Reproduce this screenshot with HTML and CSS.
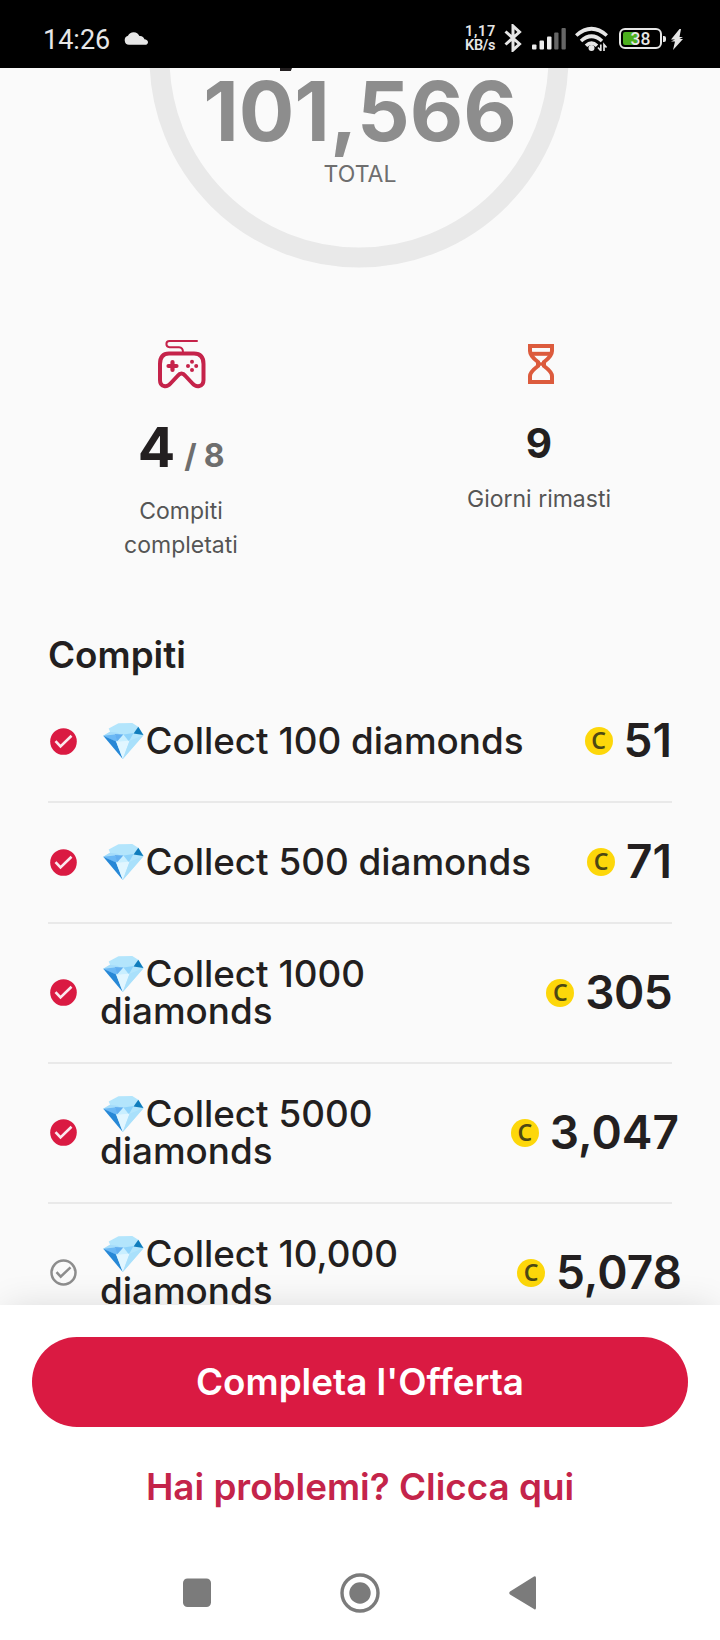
FILE: index.html
```html
<!DOCTYPE html>
<html lang="it">
<head>
<meta charset="utf-8">
<title>Compiti</title>
<link rel="stylesheet" href="styles.css">
</head>
<body>
<svg class="defs" width="0" height="0">
  <symbol id="done" viewBox="0 0 27 27"><circle cx="13.5" cy="13.5" r="13.3" fill="#da1a42"/><path d="M5.5 13.2l5 5.2L21.5 7.8" fill="none" stroke="#fbe9ee" stroke-width="2.6"/></symbol>
  <symbol id="todo" viewBox="0 0 27 27"><circle cx="13.5" cy="13.5" r="12" fill="none" stroke="#8d8d8d" stroke-width="2.5"/><path d="M6.5 13.2l4.2 4.5 9.8-9.4" fill="none" stroke="#8d8d8d" stroke-width="2.5"/></symbol>
  <symbol id="gem" viewBox="0 0 120 107">
    <path d="M0 38L20 26L16 16L45 1L86 0L104 11L120 36L58 107Z" fill="#b3e5fc"/>
    <path d="M0 38L20 26L46 30L36 54Z" fill="#a5dcfa"/>
    <path d="M0 38L34 34L46 50L36 55Z" fill="#6bb8f5"/>
    <path d="M34 33L60 34L42 54Z" fill="#62aef0"/>
    <path d="M60 34L42 54L76 54Z" fill="#c9efff"/>
    <path d="M60 34L90 30L76 54Z" fill="#8fd3fa"/>
    <path d="M104 11L119 36L90 31Z" fill="#0f7cbc"/>
    <path d="M0 38L38 55L58 107Z" fill="#2787d6"/>
    <path d="M38 55L78 53L58 107Z" fill="#e1f6ff"/>
    <path d="M78 53L120 36L58 107Z" fill="#a9e0fb"/>
  </symbol>
</svg>
<header class="status">
  <span class="clock">14:26</span>
  <svg class="cloud" width="24" height="13" viewBox="0 0 24 13"><path d="M5 12.800a4.600 4.600 0 0 1-1-9C5 1.500 7 .2 9.700 .2c2.800 0 4.600 1.500 5.700 3.800 2.400-.4 4.500 1 5 3.200C22.500 7.400 24 8.500 24 10.200c0 1.500-1.200 2.600-2.800 2.600z" fill="#e6e6e6"/></svg>
  <div class="speed"><span class="rate">1,17</span><span class="unit">KB/s</span></div>
  <svg class="bt" width="18" height="28" viewBox="0 0 18 28"><path d="M1.500 7.500L15.500 20L9 26V2L15.500 8L1.500 20.500" fill="none" stroke="#e6e6e6" stroke-width="3"/></svg>
  <svg class="signal" width="34" height="22" viewBox="0 0 34 22"><g fill="#ececec"><rect y="16.500" width="4.500" height="5" rx="1"/><rect x="7.500" y="12.500" width="4.500" height="9" rx="1"/><rect x="15" y="8.500" width="4.500" height="13" rx="1"/></g><g fill="#666"><rect x="22.200" y="4.500" width="4.300" height="17" rx="1"/><rect x="29.500" y="0" width="4.300" height="21.500" rx="1"/></g></svg>
  <svg class="wifi" width="33" height="26" viewBox="0 0 33 26"><g fill="none" stroke="#e6e6e6" stroke-width="3.600"><path d="M1.200 9.500Q16.500-4 31.800 9.500"/><path d="M6 15Q16.500 5.500 27 15"/><path d="M11 19.800Q16.500 14.500 22 19.800"/></g><circle cx="16.500" cy="22" r="3" fill="#e6e6e6"/><path d="M25.500 25v-7M22.500 21.500l3 3.500M29 18v7M29 18l2.500 3.500" stroke="#000" stroke-width="4" fill="none"/><path d="M25.800 25v-6.500M23 21.500l2.800 3.200M29 25v-6.500l2.500 3" stroke="#e6e6e6" stroke-width="1.700" fill="none"/></svg>
  <div class="battery"><span class="charge"></span><span class="level">38</span></div>
  <span class="nub"></span>
  <svg class="bolt" width="12" height="21" viewBox="0 0 12 21"><path d="M8.500 0L0 10.500h4L0 12.500h4L2 21L12 10H8.500L12 8H8.500L10 0z" fill="#e6e6e6"/></svg>
</header>
<main class="content">
  <section class="gauge">
    <svg class="ring" width="420" height="200" viewBox="0 68 420 200"><circle cx="210" cy="58" r="199.500" fill="none" stroke="#e9e9e9" stroke-width="20"/><path d="M131 68h12l-1.200 3H131z" fill="#231f20"/></svg>
    <div class="total">101,566</div>
    <div class="caption">TOTAL</div>
  </section>
  <section class="stats">
    <div class="stat tasks">
      <svg class="pad" width="50" height="50" viewBox="0 0 50 50" fill="none" stroke="#c5234a"><path d="M40 2H12.500a3 3 0 0 0 0 6.200H22q4 .3 4 5" stroke-width="2" stroke-linecap="round"/><path d="M12 14.500H37Q46.500 14.500 46.500 25V41C46.500 48.500 39 48.500 35.500 44.500L28.500 37Q24.500 32 20.500 37L13.500 44.500C10 48.500 3 48.500 3 41V25Q3 14.500 12 14.500Z" stroke-width="4"/><path d="M15.500 23v8M11.500 27h8" stroke-width="4.200" stroke-linecap="round"/><g fill="#c5234a" stroke="none"><circle cx="35" cy="22.800" r="2"/><circle cx="35" cy="31" r="2"/><circle cx="31" cy="27" r="2"/><circle cx="39.200" cy="27" r="2"/></g></svg>
      <div class="figure"><b>4</b><span>/ 8</span></div>
      <div class="label">Compiti<br>completati</div>
    </div>
    <div class="stat days">
      <svg class="glass" width="26" height="40" viewBox="0 0 26 40" fill="none" stroke="#dc5b3d" stroke-width="4"><path d="M2 2H24V7Q24 12 16 18V22Q24 28 24 32V38H2V32Q2 28 10 22V18Q2 12 2 7Z"/><path d="M2 9.800H24"/><path d="M9 20h8" stroke-width="3.500"/></svg>
      <div class="nine">9</div>
      <div class="label">Giorni rimasti</div>
    </div>
  </section>
  <h2 class="heading">Compiti</h2>
  <ul class="list">
    <li class="row"><svg class="mark"><use href="#done"/></svg><div class="name"><svg class="gem"><use href="#gem"/></svg>Collect 100 diamonds</div><i class="coin">C</i><span class="amount">51</span></li>
    <li class="row"><svg class="mark"><use href="#done"/></svg><div class="name"><svg class="gem"><use href="#gem"/></svg>Collect 500 diamonds</div><i class="coin">C</i><span class="amount">71</span></li>
    <li class="row tall"><svg class="mark"><use href="#done"/></svg><div class="name"><svg class="gem"><use href="#gem"/></svg>Collect 1000<br>diamonds</div><i class="coin">C</i><span class="amount tight">305</span></li>
    <li class="row tall"><svg class="mark"><use href="#done"/></svg><div class="name"><svg class="gem"><use href="#gem"/></svg>Collect 5000<br>diamonds</div><i class="coin">C</i><span class="amount over">3,047</span></li>
    <li class="row tall"><svg class="mark"><use href="#todo"/></svg><div class="name"><svg class="gem"><use href="#gem"/></svg>Collect 10,000<br>diamonds</div><i class="coin">C</i><span class="amount over wide">5,078</span></li>
  </ul>
</main>
<footer class="panel">
  <button class="cta">Completa l'Offerta</button>
  <a class="help">Hai problemi? Clicca qui</a>
  <nav class="nav">
    <svg width="28" height="40" viewBox="0 0 28 40"><rect y="5.500" width="28" height="28.500" rx="4.500" fill="#7b7b7b"/></svg>
    <svg width="40" height="40" viewBox="0 0 40 40"><circle cx="20" cy="20" r="18" fill="none" stroke="#7b7b7b" stroke-width="3.400"/><circle cx="20" cy="20" r="10.700" fill="#7b7b7b"/></svg>
    <svg width="28" height="40" viewBox="0 0 28 40"><path d="M1 18.500L25 3.500Q27 2.500 27 5V34.500Q27 37.500 25 36L1 21.500Q-.5 20 1 18.500Z" fill="#7b7b7b"/></svg>
  </nav>
</footer>
</body>
</html>
```
FILE: styles.css
```css
* { box-sizing: border-box; }
body { margin: 0; width: 720px; height: 1640px; overflow: hidden; background: #fafafa; color: #231f20; font-family: Inter, "Liberation Sans", sans-serif; display: flex; flex-direction: column; }
.defs { position: absolute; }
svg { display: block; flex: none; }
.status { flex: none; height: 68px; padding-left: 43px; display: flex; align-items: flex-start; background: #000; color: #e6e6e6; font-family: Roboto, sans-serif; }
.clock { width: 81px; padding-top: 24px; font-size: 27px; line-height: 32px; font-weight: 450; }
.cloud { margin-top: 32px; }
.speed { display: grid; width: 39px; margin: 25px 0 0 317px; font-size: 14.500px; line-height: 14px; font-weight: 600; white-space: nowrap; }
.rate { letter-spacing: .7px; }
.unit { letter-spacing: -.3px; }
.bt { margin-top: 24px; }
.signal { margin: 28px 0 0 10px; }
.wifi { margin: 26px 0 0 9px; }
.battery { position: relative; width: 43px; height: 21px; margin: 28px 0 0 11px; padding: 2px; border: 2px solid #e6e6e6; border-radius: 6px; }
.charge { display: block; width: 14px; height: 13px; background: #4caf1e; border-radius: 2px; }
.level { position: absolute; inset: 0; font-size: 17.500px; line-height: 18px; font-weight: 500; text-align: center; }
.nub { width: 3px; height: 6px; margin: 35.500px 5px 0 1px; border-radius: 0 2px 2px 0; background: #e6e6e6; }
.bolt { margin-top: 29px; }
.content { flex: none; height: 1237px; overflow: hidden; }
.gauge { display: grid; justify-items: center; align-content: start; height: 200px; text-align: center; }
.gauge > * { grid-column: 1; }
.ring { grid-row: 1 / 4; margin-right: 3px; }
.total { grid-row: 1; height: 87px; line-height: 86px; font-size: 82.500px; font-weight: 700; color: #8d8d8d; }
.caption { grid-row: 2; line-height: 39px; font-size: 23px; color: #6e6e6e; }
.stats { display: flex; height: 369px; text-align: center; }
.stat { width: 360px; display: flex; flex-direction: column; align-items: center; }
.pad { margin: 71px 0 0 2px; }
.tasks { padding-left: 2px; }
.figure { display: flex; align-items: baseline; gap: 9px; height: 70px; margin-top: 23px; line-height: 70px; font-weight: 700; }
.figure b { font-size: 55.500px; font-weight: 700; font-optical-sizing: none; }
.figure span { font-size: 32px; letter-spacing: -.3px; color: #6e6e6e; }
.label { font-size: 23px; line-height: 34px; color: #555; }
.tasks .label { margin-top: 12px; }
.glass { margin: 76px 0 0 3px; }
.nine { height: 60px; margin-top: 30px; line-height: 60px; font-size: 40.500px; font-weight: 700; }
.days { margin-left: -1px; }
.days .label { margin-top: 8px; }
.heading { margin: 0 0 0 48px; height: 45px; line-height: 35px; font-size: 36.800px; font-weight: 600; }
.list { list-style: none; margin: 0; padding: 0; }
.row { display: flex; align-items: center; width: 624px; height: 121px; margin-left: 48px; padding: 0 0 1px 2px; border-bottom: 2px solid #e9e9e9; }
.row.tall { height: 140px; }
.mark { width: 27px; height: 27px; }
.name { flex: 1; padding: 0 0 2px 23px; font-size: 36.800px; line-height: 37px; font-weight: 500; white-space: nowrap; }
.gem { display: inline-block; width: 41px; height: 36px; margin: 0 2px 0 2.500px; vertical-align: -5px; }
.coin { flex: none; width: 28px; height: 28px; border-radius: 50%; background: #fdd70a; color: #4d4814; font: 600 23px/27px "Noto Sans", sans-serif; text-align: center; }
.amount { margin-left: 11px; padding-bottom: 2px; font-size: 46px; line-height: 50px; font-weight: 600; }
.amount.tight { letter-spacing: -.6px; }
.amount.over { margin-right: -7px; }
.amount.wide { margin-right: -10px; }
.panel { position: relative; flex: none; height: 335px; padding-top: 32px; display: flex; flex-direction: column; align-items: center; background: #fff; box-shadow: 0 0 36px -6px rgba(0,0,0,.16); }
.cta { width: 656px; height: 90px; padding: 0; border: 0; border-radius: 45px; background: #da1a42; color: #fff; font: 600 36.800px/90px Inter, sans-serif; }
.help { height: 60px; margin-top: 30px; line-height: 60px; font-size: 36.800px; font-weight: 600; color: #c4244a; }
.nav { display: flex; justify-content: space-between; width: 354px; margin: 56px 0 0 -1px; }
```
